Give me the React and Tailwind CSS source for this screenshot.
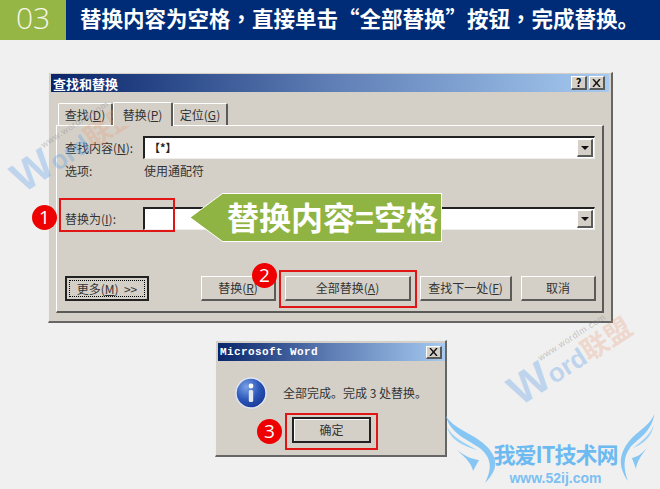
const cjk = "font-['Noto_Sans_CJK_SC','Noto_Sans',sans-serif]";
const tc = "font-['Noto_Sans_CJK_TC','Noto_Sans',sans-serif]";

function Raised({ className = "", children }) {
  return (
    <div className={`flex shrink-0 items-center justify-center bg-[#d4d0c8] border-t border-l border-t-white border-l-white border-r-2 border-b-2 border-r-[#5a5a58] border-b-[#5a5a58] text-[12px] text-[#333] ${className}`}>
      {children}
    </div>
  );
}

function TextRow({ className = "", children }) {
  return (
    <div className={`h-[23px] flex bg-white border-t-2 border-l-2 border-t-[#222] border-l-[#222] border-r border-b border-r-[#eee] border-b-[#eee] ${className}`}>
      <div className="flex-1 pl-1 text-[11px] font-bold leading-[19px] text-[#222]">{children}</div>
      <Raised className="w-[16px] h-[18px] mr-px mt-[1px]">
        <svg width="8" height="4" viewBox="0 0 8 4"><path d="M0 0h8L4 4z" fill="#111" /></svg>
      </Raised>
    </div>
  );
}

function Tab({ active, children }) {
  return (
    <div className={`flex items-center justify-center bg-[#d4d0c8] border-t border-l border-white border-r-2 border-r-[#5a5a58] rounded-t-[2px] text-[12px] text-[#333] ${active ? "w-[60px] h-[24px] -mb-px relative z-10 border-b-0" : "w-[55px] h-[22px] border-b-0"}`}>
      {children}
    </div>
  );
}

function Watermark({ className }) {
  return (
    <div className={`absolute flex w-max whitespace-nowrap items-baseline -rotate-[33deg] origin-left ${className}`}>
      <span className="font-['Liberation_Sans'] font-bold text-[43px] leading-none text-[#5f9fe6]/35">W</span>
      <span className="font-['Liberation_Sans'] font-bold text-[26px] leading-none text-[#5f9fe6]/35">ord</span>
      <span className={`${cjk} font-bold text-[27px] leading-none text-[#ea9a70]/30`}>联盟</span>
      <span className="absolute left-[42px] top-[2px] font-['Liberation_Sans'] text-[9px] tracking-[0.6px] leading-none text-[#888]/45">www.wordlm.com</span>
    </div>
  );
}

function Badge({ className, children }) {
  return (
    <div className={`absolute w-[25px] h-[25px] rounded-full bg-[#ee0000] text-white flex items-center justify-center font-['Open_Sans'] text-[19px] leading-none ${className}`}>{children}</div>
  );
}

function RedBox({ className }) {
  return <div className={`absolute border-2 border-[#e01515] ${className}`} />;
}

function Wing({ flip, width }) {
  return (
    <svg width={width} height="70" viewBox="0 0 56 70" preserveAspectRatio="none" className={flip ? "-scale-x-100" : ""}>
      <path d="M1 2C8 14 26 19 38 29C53 42 55 54 40 69C47 55 47 45 36 35C24 26 5 20 1 2Z" fill="#86c6f4" />
      <path d="M2 13C8 24 20 29 32 36C22 33 6 28 2 13Z" fill="#9ed2f6" />
      <path d="M12 36C20 42 26 45 34 46L28 57C27 50 21 44 12 36Z" fill="#86c6f4" />
    </svg>
  );
}

export default function App() {
  return (
    <div className={`relative w-[660px] h-[489px] overflow-hidden bg-[#f0f0f0] ${cjk}`}>
      <header className="flex h-[40px]">
        <div className="w-[66px] bg-[#95b544] text-[#f4f7ea] font-['Open_Sans'] text-[30px] leading-[36px] text-center font-light">03</div>
        <div className="flex-1 bg-[#002c77] text-white font-bold text-[21.5px] leading-[35px] pl-[14px] whitespace-nowrap">替换内容为空格<span className={tc}>，</span>直接单击“全部替换”按钮<span className={tc}>，</span>完成替换。</div>
      </header>

      <section className="ml-[48px] mt-[32px] w-[565px] h-[251px] bg-[#d4d0c8] border-t border-l border-[#eee] border-r-2 border-b-2 border-r-[#666] border-b-[#666] pt-px pl-px pr-[2px]">
        <div className="h-[18px] bg-gradient-to-r from-[#0a246a] via-[#5f7eb5] to-[#a6caf0] flex items-center justify-between pl-[2px] pr-[4px] ml-px">
          <span className="text-white font-bold text-[13px] leading-none">查找和替换</span>
          <div className="flex gap-[2px]">
            <Raised className="w-[16px] h-[14px] font-bold !text-black !text-[11px] leading-none">?</Raised>
            <Raised className="w-[16px] h-[14px]">
              <svg width="9" height="8" viewBox="0 0 9 8"><path d="M1 0l7 8M8 0L1 8" stroke="#111" strokeWidth="1.4" fill="none" /></svg>
            </Raised>
          </div>
        </div>

        <div className="flex items-end h-[33px] pl-[8px]">
          <Tab>查找(<u>D</u>)</Tab>
          <Tab active>替换(<u>P</u>)</Tab>
          <Tab>定位(<u>G</u>)</Tab>
        </div>

        <div className="ml-[6px] mr-[5px] h-[188px] border-t border-l border-white border-r-2 border-b-2 border-r-[#5a5a58] border-b-[#5a5a58] pl-[8px] pr-[6px] pt-[10px]">
          <div className="flex items-center text-[12px] text-[#333]">
            <span className="w-[78px]">查找内容(<u>N</u>):</span>
            <TextRow className="flex-1 mr-px">【*】</TextRow>
          </div>
          <div className="flex items-center text-[12px] text-[#333] mt-[3px] h-[18px]">
            <span className="w-[79px]">选项:</span>
            <span>使用通配符</span>
          </div>
          <div className="flex items-center text-[12px] text-[#333] mt-[27px]">
            <span className="w-[78px]">替换为(<u>I</u>):</span>
            <TextRow className="flex-1 mr-px" />
          </div>
          <div className="flex mt-[46px] text-[12px]">
            <div className="w-[84px] h-[25px] shrink-0 border-2 border-[#222] p-[2px] bg-[#d4d0c8]">
              <div className="h-full border border-dotted border-black flex items-center justify-center text-[12px] text-[#333] whitespace-nowrap">更多(<u>M</u>)&nbsp;&nbsp;&gt;&gt;</div>
            </div>
            <Raised className="w-[75px] h-[25px] ml-[52px]">替换(<u>R</u>)</Raised>
            <Raised className="w-[126px] h-[25px] ml-[9px]">全部替换(<u>A</u>)</Raised>
            <Raised className="w-[92px] h-[25px] ml-[9px]">查找下一处(<u>F</u>)</Raised>
            <Raised className="w-[75px] h-[25px] ml-[9px]">取消</Raised>
          </div>
        </div>
      </section>

      <section className="ml-[215px] mt-[17px] w-[232px] h-[117px] bg-[#d4d0c8] border-t border-l border-[#eee] border-r-2 border-b-2 border-r-[#666] border-b-[#666] pt-[2px] pl-[2px]">
        <div className="h-[18px] bg-gradient-to-r from-[#0a246a] via-[#5f7eb5] to-[#a6caf0] flex items-center justify-between pl-[2px] pr-[3px]">
          <span className="text-white font-['Liberation_Mono'] font-bold text-[11px] tracking-[0.4px] leading-none">Microsoft Word</span>
          <Raised className="w-[16px] h-[13px]">
            <svg width="9" height="8" viewBox="0 0 9 8"><path d="M1 0l7 8M8 0L1 8" stroke="#111" strokeWidth="1.4" fill="none" /></svg>
          </Raised>
        </div>
        <div className="flex items-center pl-[17px] mt-[16px]">
          <svg width="32" height="32" viewBox="0 0 32 32">
            <defs>
              <radialGradient id="infoB" cx="0.35" cy="0.3" r="0.8">
                <stop offset="0" stopColor="#7aa2e6" />
                <stop offset="0.55" stopColor="#2a55b8" />
                <stop offset="1" stopColor="#17358c" />
              </radialGradient>
            </defs>
            <circle cx="16" cy="16" r="15" fill="url(#infoB)" stroke="#dfe6f4" strokeWidth="1.4" />
            <circle cx="16" cy="9" r="2.4" fill="#fff" />
            <rect x="13.8" y="13" width="4.4" height="12" rx="1.5" fill="#e4e8f0" />
          </svg>
          <span className="ml-[16px] text-[12px] text-[#333]">全部完成。完成 3 处替换。</span>
        </div>
        <div className="ml-[74px] mt-[8px] w-[79px] h-[26px] border-2 border-[#222] bg-[#d4d0c8] flex items-center justify-center text-[12px] text-[#333] shadow-[inset_1px_1px_0_#fff]">确定</div>
      </section>

      <Watermark className="left-[15px] top-[160px]" />
      <Watermark className="left-[512px] top-[373px]" />

      {/* annotations */}
      <RedBox className="left-[59px] top-[198px] w-[116px] h-[34px]" />
      <RedBox className="left-[279px] top-[270px] w-[138px] h-[38px]" />
      <RedBox className="left-[285px] top-[413px] w-[93px] h-[37px]" />
      <Badge className="left-[32px] top-[205px]">1</Badge>
      <Badge className="left-[252px] top-[263px]">2</Badge>
      <Badge className="left-[257px] top-[419px]">3</Badge>

      <div className="absolute left-[189px] top-[193px] flex items-stretch h-[49px]">
        <svg width="34" height="49" viewBox="0 0 34 49" className="block">
          <path d="M33.5 0.5L1 24.5L33.5 48.5Z" fill="#8fb443" stroke="#fff" />
        </svg>
        <div className="-ml-px w-[220px] bg-[#8fb443] border border-l-0 border-white text-white font-bold text-[32px] leading-[44px] whitespace-nowrap pl-[5px]">替换内容=空格</div>
      </div>

      {/* logo */}
      <div className="absolute left-[445px] top-[414px] w-[215px] h-[72px]">
        <div className="absolute left-0 top-0"><Wing width={56} /></div>
        <div className="absolute left-[172px] -top-[2px]"><Wing flip width={38} /></div>
        <div className="absolute left-[48px] top-[28px] w-[125px] text-center font-bold text-[22px] tracking-[-1px] leading-none whitespace-nowrap text-[#6dbaf0]">我爱IT技术网</div>
        <div className="absolute left-[48px] top-[57px] w-[125px] text-center font-['Liberation_Sans'] font-bold text-[14px] leading-none text-[#7cc0f2]">www.52ij.com</div>
      </div>
    </div>
  );
}
